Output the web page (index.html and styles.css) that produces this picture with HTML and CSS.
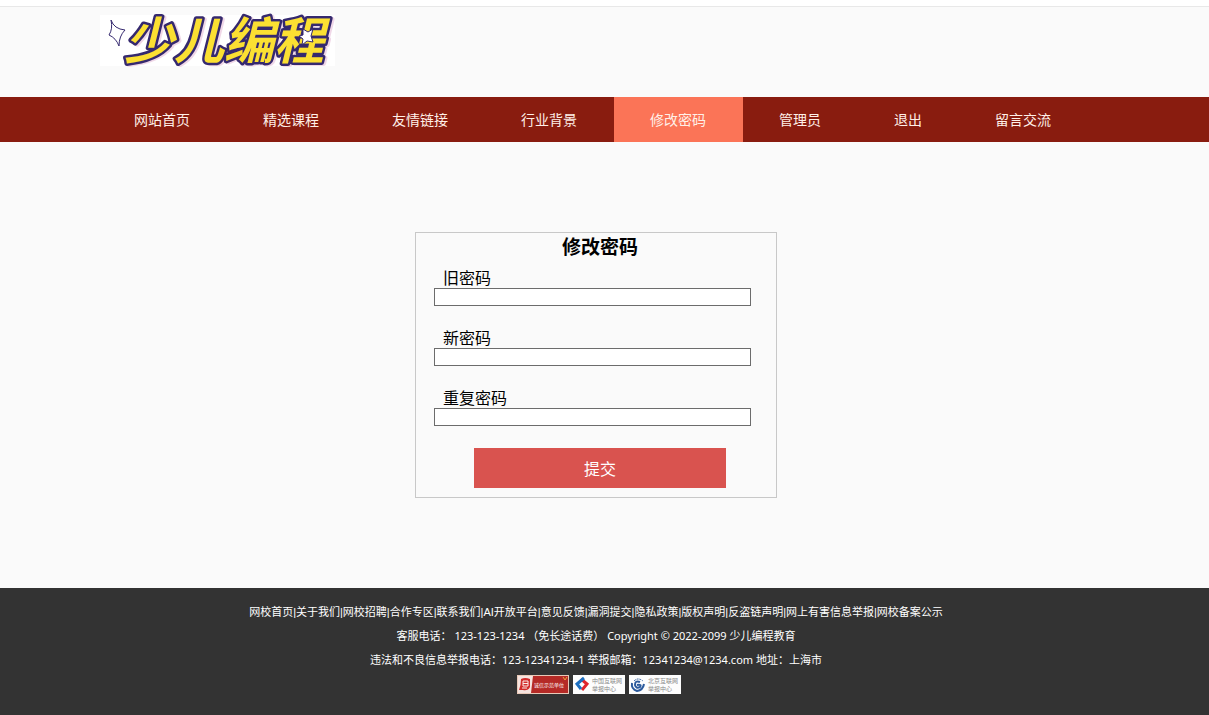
FILE: index.html
```html
<!DOCTYPE html>
<html lang="zh-CN">
<head>
<meta charset="UTF-8">
<meta name="viewport" content="width=device-width, initial-scale=1.0">
<title>修改密码</title>
<link rel="stylesheet" href="styles.css">
</head>
<body>
<header class="header">
  <a class="logo" href="#">
    <svg width="235" height="51" viewBox="0 0 235 51">
      <path class="star" d="M11 5 Q14 14 25 15 Q19 21 19 31 Q16 23 9 20 Q13 14 11 5 Z"/>
      <text class="logo-text" x="24" y="44">少儿编程</text>
      <path class="star" d="M203 14 L208 17 L213 14 L211 21 L213 27 L207 26 L202 30 L203 24 L199 21 L203 20 Z"/>
    </svg>
  </a>
</header>

<nav class="nav">
  <a href="#">网站首页</a>
  <a href="#">精选课程</a>
  <a href="#">友情链接</a>
  <a href="#">行业背景</a>
  <a href="#" class="active">修改密码</a>
  <a href="#">管理员</a>
  <a href="#">退出</a>
  <a href="#">留言交流</a>
</nav>

<main class="main">
  <form class="password-form">
    <h3>修改密码</h3>
    <div class="field">
      <label for="oldPassword">旧密码</label>
      <input type="password" id="oldPassword">
    </div>
    <div class="field">
      <label for="newPassword">新密码</label>
      <input type="password" id="newPassword">
    </div>
    <div class="field">
      <label for="repeatPassword">重复密码</label>
      <input type="password" id="repeatPassword">
    </div>
    <button type="submit">提交</button>
  </form>
</main>

<footer class="footer">
  <p class="footer-links"><a href="#">网校首页</a>|<a href="#">关于我们</a>|<a href="#">网校招聘</a>|<a href="#">合作专区</a>|<a href="#">联系我们</a>|<a href="#">AI开放平台</a>|<a href="#">意见反馈</a>|<a href="#">漏洞提交</a>|<a href="#">隐私政策</a>|<a href="#">版权声明</a>|<a href="#">反盗链声明</a>|<a href="#">网上有害信息举报</a>|<a href="#">网校备案公示</a></p>
  <p>客服电话： 123-123-1234 （免长途话费） Copyright © 2022-2099 少儿编程教育</p>
  <p>违法和不良信息举报电话：123-12341234-1 举报邮箱：12341234@1234.com 地址：上海市</p>
  <div class="badges">
    <a href="#">
      <svg width="52" height="19" viewBox="0 0 52 19">
        <rect width="52" height="19" fill="#e9c9b8"/>
        <rect x="1" y="1" width="50" height="17" fill="#b52a26"/>
        <path d="M1 1 H16 L14 18 H1 Z" fill="#f6e4df"/>
        <path d="M4 4 Q8 2 13 4 L13 12 Q11 16 6 15 L2 15 Q4 10 4 4 Z" fill="#d22b2b"/>
        <path d="M6 6 H11 V11 H6 Z M6 8.500 H11 M5 13 H10" fill="none" stroke="#fbe9e6"/>
        <path d="M46 2 L48 5 L50 2" fill="none" stroke="#e8a23c"/>
        <text class="badge-text badge-light" x="17" y="12">诚信示范单位</text>
      </svg>
    </a>
    <a href="#">
      <svg width="52" height="19" viewBox="0 0 52 19">
        <rect width="52" height="19" fill="#fdfdfd"/>
        <path d="M8 4 L14 9 L9 15" fill="none" stroke="#e0252b" stroke-width="3"/>
        <path d="M11 3 L4 9 L8 14" fill="none" stroke="#1c6fc0" stroke-width="3"/>
        <text class="badge-text" x="19" y="8">中国互联网</text>
        <text class="badge-text" x="19" y="16">举报中心</text>
      </svg>
    </a>
    <a href="#">
      <svg width="52" height="19" viewBox="0 0 52 19">
        <rect width="52" height="19" fill="#fdfdfd"/>
        <path d="M3 8 Q2 14 8 16 Q14 15 15 9" fill="none" stroke="#2c5a9c" stroke-width="2"/>
        <path d="M5 6 Q9 2 14 6" fill="none" stroke="#2c5a9c" stroke-dasharray="2 1"/>
        <path d="M11 7 Q6 5 6 10 Q7 14 11 12 Q13 9 8 10" fill="none" stroke="#2c5a9c" stroke-width="2"/>
        <text class="badge-text" x="19" y="8">北京互联网</text>
        <text class="badge-text" x="19" y="16">举报中心</text>
      </svg>
    </a>
  </div>
</footer>
</body>
</html>
```
FILE: styles.css
```css
* {
  box-sizing: border-box;
}
body {
  display: flex;
  flex-direction: column;
  min-height: 100vh;
  margin: 0;
  border-top: 6px solid #fff;
  background-color: #fafafa;
  color: #000;
  font-family: "Noto Sans", "Noto Sans CJK SC", sans-serif;
  font-size: 16px;
}
a {
  color: inherit;
  text-decoration: none;
}
.header {
  height: 91px;
  padding: 8px 100px 0;
  border-top: 1px solid #e8e8e8;
}
.logo {
  display: inline-block;
  background-color: #fff;
}
.logo svg {
  display: block;
  overflow: visible;
}
.logo-text {
  fill: #fbe032;
  stroke: #35296f;
  stroke-width: 5px;
  stroke-linejoin: round;
  paint-order: stroke fill;
  font-family: "Noto Sans CJK SC", sans-serif;
  font-size: 50px;
  font-weight: 700;
  font-style: italic;
  filter: drop-shadow(2px 1px 0 #f0d8e8);
}
.star {
  fill: #fff;
  stroke: #35296f;
}
.nav {
  display: flex;
  height: 45px;
  padding: 0 98px;
  background-color: #891c0f;
}
.nav a {
  padding: 0 37px 0 36px;
  color: #fff0e8;
  font-size: 14px;
  line-height: 45px;
  white-space: nowrap;
}
.nav a.active {
  background-color: #fb7457;
}
.main {
  flex: 1;
  padding: 90px 17px 90px 0;
}
.password-form {
  width: 362px;
  margin: 0 auto;
  padding: 0 0 9px 8px;
  border: 1px solid #c8c8c8;
}
.password-form h3 {
  margin: 0 0 7px;
  font-size: 19px;
  line-height: 28px;
  text-align: center;
}
.field {
  margin: 0 25px 22px 10px;
}
.field label {
  display: block;
  padding-left: 9px;
  line-height: 20px;
}
.field input {
  display: block;
  width: 100%;
  height: 18px;
  padding: 1px 2px;
  border: 1px solid #6c6c6c;
  background-color: #fff;
  outline: none;
}
.password-form button {
  display: block;
  width: 252px;
  height: 40px;
  margin: 0 auto;
  border: none;
  background-color: #d9534f;
  color: #fff;
  font-family: inherit;
  font-size: 16px;
  cursor: pointer;
}
.footer {
  padding: 12px 17px 21px 0;
  background-color: #333;
  color: #fff;
  font-size: 11px;
  line-height: 24px;
  text-align: center;
}
.footer p {
  margin: 0;
}
.footer-links {
  font-family: "Liberation Sans", "Noto Sans CJK SC", sans-serif;
}
.badges {
  display: flex;
  justify-content: center;
  gap: 4px;
  margin-top: 3px;
  padding-left: 6px;
}
.badges svg {
  display: block;
}
.badge-text {
  fill: #8a8a8a;
  font-size: 6px;
}
.badge-light {
  fill: #fff;
  font-size: 5px;
}
```
